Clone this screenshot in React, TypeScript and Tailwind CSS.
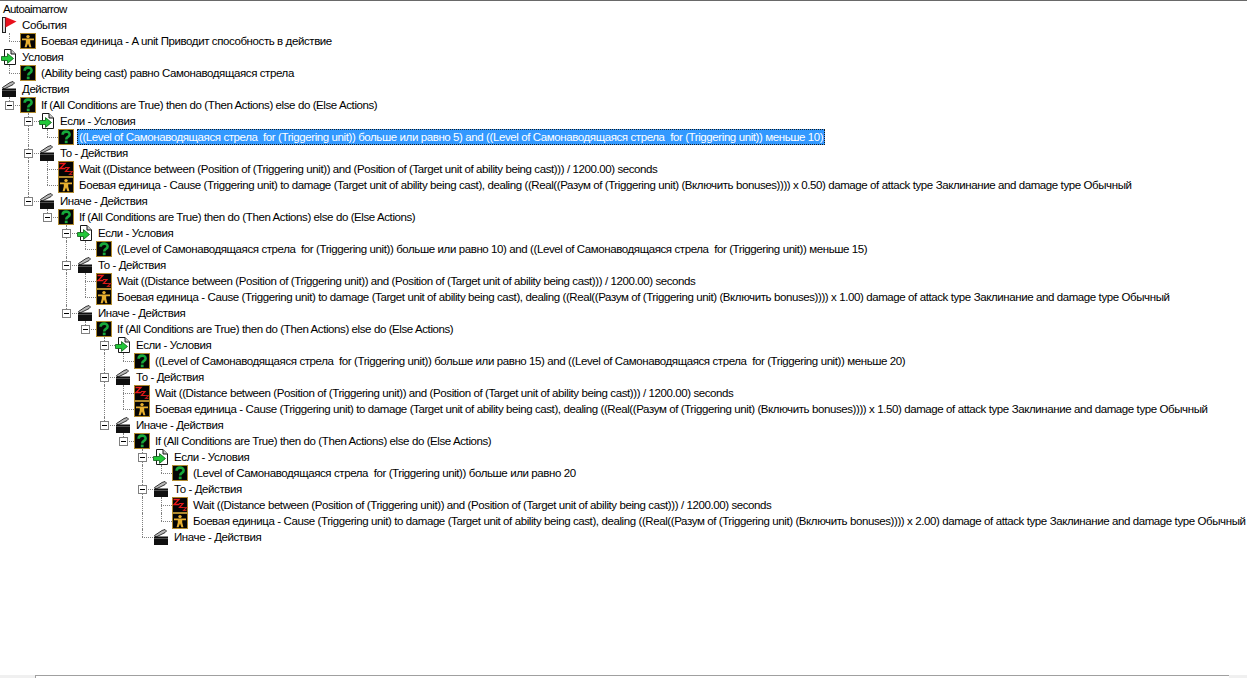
import type { ReactNode } from 'react'

type IconKind = 'flag' | 'cond' | 'action' | 'unit' | 'question' | 'wait'
type GuideType = 'pipe' | 'tee' | 'last' | 'none'

type TreeNode = {
    icon: IconKind
    text: string
    selected?: boolean
    expander?: boolean
    children?: TreeNode[]
}

const GoldBox = ({ children }: { children: ReactNode }) => (
    <svg width="16" height="16" viewBox="0 0 16 16" className="block">
        <rect x="0.5" y="0.5" width="15" height="15" fill="#050505" stroke="#b08a2e" />
        {children}
    </svg>
)

const Icon = ({ kind }: { kind: IconKind }) => {
    if (kind === 'unit') {
        return (
            <GoldBox>
                <circle cx="8" cy="3.6" r="1.7" fill="#e8b030" />
                <path d="M2 5.6H14V7.2H10.2V9.5L11.4 14.2H9.4L8 10.6L6.6 14.2H4.6L5.8 9.5V7.2H2Z" fill="#e8b030" />
            </GoldBox>
        )
    }
    if (kind === 'question') {
        return (
            <GoldBox>
                <path d="M4.6 5.8C4.6 1.6 11.6 1.6 11.6 5.4C11.6 8 8.2 7.8 8.2 10.4" fill="none" stroke="#16a83a" strokeWidth="2.6" />
                <rect x="6.8" y="11.6" width="2.8" height="2.6" fill="#16a83a" />
            </GoldBox>
        )
    }
    if (kind === 'wait') {
        return (
            <GoldBox>
                <path d="M1.5 2.5H7L2 7.5H7.5" fill="none" stroke="#ee1818" strokeWidth="1.3" />
                <path d="M7 6.5H11L7.5 10.5H11.5" fill="none" stroke="#e01818" strokeWidth="1.2" />
                <path d="M11 10.5H14.5L11.5 13.5H14.5" fill="none" stroke="#b81818" strokeWidth="1.1" />
            </GoldBox>
        )
    }
    if (kind === 'flag') {
        return (
            <svg width="16" height="16" viewBox="0 0 16 16" className="block">
                <rect x="1.5" y="0.5" width="3" height="15" fill="#d8d8d8" stroke="#202020" />
                <path d="M4.5 0L15.5 4.5L4.5 10.5Z" fill="#e8101c" />
            </svg>
        )
    }
    if (kind === 'cond') {
        return (
            <svg width="16" height="16" viewBox="0 0 16 16" className="block">
                <path d="M3.5 0.5H10L14.5 5V15.5H3.5Z" fill="#fff" stroke="#181818" />
                <path d="M10 0.5V5H14.5" fill="#c8c8c8" stroke="#181818" />
                <path d="M0.5 7.5H6.5V4.6L12.5 9.5L6.5 14.4V11.5H0.5Z" fill="#22c83a" stroke="#0c5c14" strokeWidth="0.8" />
            </svg>
        )
    }
    return (
        <svg width="16" height="16" viewBox="0 0 16 16" className="block">
            <path d="M1.5 6.5L9 1.5L12 0.5L13.5 2L12 3.6L3 8Z" fill="#b8b8b8" stroke="#202020" strokeWidth="0.9" />
            <rect x="1" y="7.5" width="14" height="8.5" fill="#101010" />
            <path d="M1 9.5H15" stroke="#505050" />
        </svg>
    )
}

const damage = (mult: string) =>
    `Боевая единица - Cause (Triggering unit) to damage (Target unit of ability being cast), dealing ((Real((Разум of (Triggering unit) (Включить bonuses)))) x ${mult}) damage of attack type Заклинание and damage type Обычный`

const WAIT_TEXT = 'Wait ((Distance between (Position of (Triggering unit)) and (Position of (Target unit of ability being cast))) / 1200.00) seconds'
const IF_TEXT = 'If (All Conditions are True) then do (Then Actions) else do (Else Actions)'

const range = (from: number, to: number) =>
    `((Level of Самонаводящаяся стрела  for (Triggering unit)) больше или равно ${from}) and ((Level of Самонаводящаяся стрела  for (Triggering unit)) меньше ${to})`

const branch = (condition: string, mult: string, orElse: TreeNode[], selected = false): TreeNode => ({
    icon: 'question',
    text: IF_TEXT,
    expander: true,
    children: [
        {
            icon: 'cond',
            text: 'Если - Условия',
            expander: true,
            children: [{ icon: 'question', text: condition, selected }],
        },
        {
            icon: 'action',
            text: 'То - Действия',
            expander: true,
            children: [
                { icon: 'wait', text: WAIT_TEXT },
                { icon: 'unit', text: damage(mult) },
            ],
        },
        {
            icon: 'action',
            text: 'Иначе - Действия',
            expander: orElse.length > 0,
            children: orElse,
        },
    ],
})

const innerMost = branch('(Level of Самонаводящаяся стрела  for (Triggering unit)) больше или равно 20', '2.00', [])
const third = branch(range(15, 20), '1.50', [innerMost])
const second = branch(range(10, 15), '1.00', [third])
const first = branch(range(5, 10), '0.50', [second], true)

const tree: TreeNode[] = [
    {
        icon: 'flag',
        text: 'События',
        children: [{ icon: 'unit', text: 'Боевая единица - A unit Приводит способность в действие' }],
    },
    {
        icon: 'cond',
        text: 'Условия',
        children: [{ icon: 'question', text: '(Ability being cast) равно Самонаводящаяся стрела' }],
    },
    { icon: 'action', text: 'Действия', children: [first] },
]

// one 19px wide column of the dotted guides in front of a row
const Guide = ({ type, expander }: { type: GuideType; expander?: boolean }) => (
    <div className="relative h-4 w-[19px] shrink-0">
        {(type === 'pipe' || type === 'tee') && (
            <div className="absolute left-[9px] top-0 h-4 border-l border-dotted border-[#808080]" />
        )}
        {type === 'last' && <div className="absolute left-[9px] top-0 h-2 border-l border-dotted border-[#808080]" />}
        {(type === 'tee' || type === 'last') && (
            <div className="absolute left-[9px] top-2 w-[11px] border-t border-dotted border-[#808080]" />
        )}
        {expander && (
            <div className="absolute left-[5px] top-1 flex h-[9px] w-[9px] items-center justify-center border border-[#808080] bg-white">
                <div className="h-px w-[5px] bg-black" />
            </div>
        )}
    </div>
)

const Row = ({ node, guides }: { node: TreeNode; guides: GuideType[] }) => (
    <div className="flex h-4 items-center">
        {guides.map((type, index) => (
            <Guide key={index} type={type} expander={index === guides.length - 1 && node.expander} />
        ))}
        <div className="ml-px w-4 shrink-0">
            <Icon kind={node.icon} />
        </div>
        <span
            className={
                node.selected
                    ? 'ml-[3px] whitespace-pre bg-[#3399ff] px-0.5 leading-4 text-white outline-1 outline-dotted outline-[#1a1a1a] -outline-offset-1'
                    : 'ml-[5px] whitespace-pre leading-4 text-black'
            }
        >
            {node.text}
        </span>
    </div>
)

const Branch = ({ nodes, prefix, depth }: { nodes: TreeNode[]; prefix: GuideType[]; depth: number }) => (
    <>
        {nodes.map((node, index) => {
            const isLast = index === nodes.length - 1
            const guides: GuideType[] = depth === 0 ? [] : [...prefix, isLast ? 'last' : 'tee']
            const nextPrefix: GuideType[] = depth === 0 ? [] : [...prefix, isLast ? 'none' : 'pipe']
            return (
                <div key={index}>
                    <Row node={node} guides={guides} />
                    {node.children && <Branch nodes={node.children} prefix={nextPrefix} depth={depth + 1} />}
                </div>
            )
        })}
    </>
)

export default function App() {
    return (
        <div className="flex h-[678px] w-[1247px] flex-col overflow-hidden bg-white font-['Liberation_Sans',sans-serif] text-[11.5px] tracking-[-0.405px]">
            <div className="min-h-0 flex-1 overflow-hidden border-t border-[#696969]">
                <div className="flex h-4 items-center pl-[3px] leading-4 tracking-[-0.6px] text-black">Autoaimarrow</div>
                <Branch nodes={tree} prefix={[]} depth={0} />
            </div>
            <div className="flex h-[3px] shrink-0">
                <div className="w-[35px] bg-[#f0f0f0]" />
                <div className="flex-1 border-l border-t border-[#a0a0a0] bg-white" />
                <div className="w-[18px] bg-[#f0f0f0]" />
            </div>
        </div>
    )
}
